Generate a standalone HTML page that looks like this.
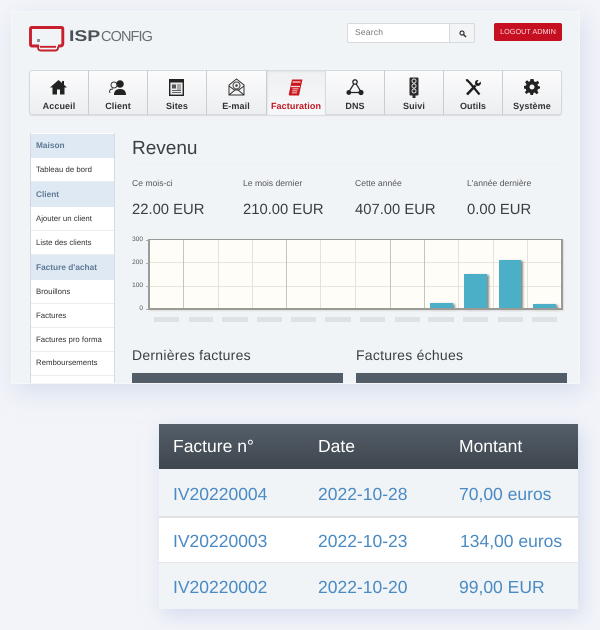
<!DOCTYPE html>
<html><head><meta charset="utf-8"><style>
html,body{margin:0;padding:0}
body{width:600px;height:630px;position:relative;overflow:hidden;background:#f2f4f9;font-family:"Liberation Sans",sans-serif;text-rendering:geometricPrecision}
div,span,svg{position:absolute;box-sizing:border-box}
.t{white-space:nowrap}
.nav{left:29px;top:70px;width:533px;height:45px;border:1px solid #d5d8dc;border-radius:3px;background:linear-gradient(#fbfbfc,#eceef0);box-shadow:0 1px 1px #d8dbe0}
.sep{top:70px;width:1px;height:45px;background:#c9ccd0}
.nl{top:101px;font-size:9px;font-weight:bold;color:#333;width:60px;text-align:center;white-space:nowrap;letter-spacing:.1px}
.si{left:31px;width:83px;background:#fff;border-bottom:1px solid #e9edf2;font-size:7.8px;color:#333;padding-left:5px;white-space:nowrap}
.sh{left:31px;width:83px;background:#dfe9f3;font-size:8.3px;font-weight:bold;color:#5f7a96;padding-left:5px;white-space:nowrap}
.lb{top:178px;font-size:8.6px;color:#555;white-space:nowrap}
.val{top:202px;font-size:14.8px;color:#3a3d40;white-space:nowrap}
.g{left:149px;width:413px;height:1px;background:#e8e6dd}
.v{top:240px;width:1px;height:69px;background:#c6c5bd}
.v.l{background:#e4e2da}
.bar{background:#4bafc7;box-shadow:2px 1px 2px #8a8a84}
.xl{top:317px;height:5px;background:#dfe2e5}
.yl{font-size:6.5px;color:#555;width:20px;text-align:right;left:123px}
.h{top:424px;font-size:17.5px;color:#fff;white-space:nowrap}
.c{font-size:17.5px;color:#4a8ac4;white-space:nowrap}
</style></head><body>
<div style="left:0;top:0;width:600px;height:400px;filter:blur(.3px)">
<div style="left:12px;top:12px;width:567px;height:371px;background:#f1f4f7;box-shadow:0 0 0 1px #f6f7fa,4px 8px 22px rgba(190,203,228,.55)"></div>

<!-- logo -->
<svg style="left:28px;top:25px" width="38" height="28" viewBox="0 0 38 28"><path d="M11 21H4Q2.500 21 2.500 19V4Q2.500 2.500 4 2.500H33Q34.800 2.500 34.800 4V18.500Q34.800 21 32 21H30" fill="none" stroke="#c7202c" stroke-width="2.900"/><path d="M10.500 20Q9 25.500 13 25.500H27Q30.500 25.500 30 21.500M12 21.800H28" fill="none" stroke="#c7202c" stroke-width="1.900"/><rect x="9" y="14" width="3" height="3" fill="#8a8f94"/></svg>
<div class="t" style="left:69px;top:27px;font-size:15.500px;line-height:20px;font-weight:bold;color:#4c5257;transform:scaleX(1.25);transform-origin:left top">ISP</div>
<div class="t" style="left:101px;top:27px;font-size:14.500px;line-height:20px;color:#6a6f74;letter-spacing:-.9px">CONFIG</div>

<!-- search -->
<div style="left:347px;top:23px;width:103px;height:20px;background:#fff;border:1px solid #d6d9dd;border-radius:2px 0 0 2px"></div>
<div class="t" style="left:355px;top:27px;font-size:8.500px;color:#777;letter-spacing:.2px">Search</div>
<div style="left:449px;top:23px;width:26px;height:20px;background:#f3f4f6;border:1px solid #d6d9dd;border-radius:0 2px 2px 0"></div>
<svg style="left:459px;top:30px" width="8" height="8" viewBox="0 0 8 8"><circle cx="3" cy="3" r="2" fill="none" stroke="#333" stroke-width="1.200"/><path d="M4.500 4.500L7 7" stroke="#333" stroke-width="1.500"/></svg>
<div class="t" style="left:494px;top:23px;width:68px;height:18px;background:#c60f21;border-radius:2px;color:#f8d9dc;font-size:7.300px;line-height:17px;text-align:center">LOGOUT ADMIN</div>

<!-- nav -->
<div class="nav"></div>
<div style="left:266px;top:70px;width:59px;height:45px;background:linear-gradient(#eff0f2,#f7f8f9);box-shadow:inset 1px 1px 2px #cfd1d4"></div>
<div class="sep" style="left:88px"></div><div class="sep" style="left:147px"></div><div class="sep" style="left:206px"></div><div class="sep" style="left:266px"></div><div class="sep" style="left:325px;background:#d9dbde"></div><div class="sep" style="left:384px"></div><div class="sep" style="left:443px"></div><div class="sep" style="left:502px"></div>

<svg style="left:49px;top:79px" width="20" height="16" viewBox="0 0 20 16"><path d="M9.500 1L1 8.500H3.500V15.500H8V10.500H11V15.500H15.500V8.500H18L15 5.800V2H13V4Z" fill="#222"/></svg>
<svg style="left:108px;top:79px" width="20" height="17" viewBox="0 0 20 17"><circle cx="12" cy="5" r="3.800" fill="#222"/><path d="M6 16Q6 10 12 10Q18 10 18 16Z" fill="#222"/><circle cx="6" cy="6" r="3" fill="none" stroke="#333" stroke-width="1"/><path d="M2 14Q0.500 10 5 10" fill="none" stroke="#333" stroke-width="1"/></svg>
<svg style="left:169px;top:79px" width="15" height="17" viewBox="0 0 15 17"><rect x=".7" y=".7" width="13.600" height="15.600" fill="#e8e9ea" stroke="#222" stroke-width="1.400"/><rect x="1" y="1" width="13" height="2.500" fill="#222"/><rect x="3" y="5.500" width="4" height="4" fill="#555"/><path d="M8 6H12M8 8H12M8 10H12M3 11.500H12M3 13.500H12" stroke="#666" stroke-width="1"/></svg>
<svg style="left:228px;top:78px" width="17" height="18" viewBox="0 0 17 18"><path d="M1 7L8.500 1L16 7V17H1Z" fill="#f3f3f3" stroke="#333" stroke-width="1"/><circle cx="8.500" cy="7.500" r="3.500" fill="none" stroke="#444" stroke-width="1"/><circle cx="8.500" cy="7.500" r="1.300" fill="#444"/><path d="M1 8L7 12.500M16 8L10 12.500M1 17L7 12H10L16 17" fill="none" stroke="#333" stroke-width="1"/></svg>
<svg style="left:288px;top:79px" width="15" height="17" viewBox="0 0 15 17"><path d="M4 .5Q4.500 .5 14.500 .5L13 7L11 16.500H2Q.5 16.500 .8 15Z" fill="#c9161f"/><path d="M4.500 3H12.500M3 7.500H12" stroke="#f7dede" stroke-width="1.200"/><path d="M4.500 9.800H10.500M4.200 11.800H9.500M3.800 13.800H9" stroke="#fbe4e4" stroke-width=".9"/></svg>
<svg style="left:346px;top:79px" width="18" height="17" viewBox="0 0 18 17"><path d="M9 3L2.500 13.500H15.500Z" fill="none" stroke="#222" stroke-width="1.200"/><circle cx="9" cy="3" r="2.200" fill="#f4f4f4" stroke="#222" stroke-width="1.300"/><circle cx="2.800" cy="13.500" r="2.400" fill="#222"/><circle cx="15" cy="13.500" r="2.600" fill="#222"/></svg>
<svg style="left:409px;top:77px" width="10" height="21" viewBox="0 0 10 21"><rect x=".5" y=".5" width="9" height="18" rx="1" fill="#2a2a2a"/><rect x="3.500" y="18" width="3" height="3" fill="#2a2a2a"/><circle cx="5" cy="4" r="2" fill="none" stroke="#ddd" stroke-width="1"/><circle cx="5" cy="9" r="2" fill="none" stroke="#ddd" stroke-width="1"/><circle cx="5" cy="14" r="2" fill="none" stroke="#ddd" stroke-width="1"/></svg>
<svg style="left:465px;top:79px" width="17" height="17" viewBox="0 0 17 17"><path d="M2 1L5 4L14.500 15.500" stroke="#1e1e1e" stroke-width="2.200" fill="none"/><path d="M1 1.500L3 0.800" stroke="#1e1e1e" stroke-width="2"/><path d="M2 15.500L10.500 6.500" stroke="#1e1e1e" stroke-width="2.600"/><path d="M15.800 2.500L13.500 4.500L12 3.500L13.500 1Q10 .5 10 4Q10 7 13 7Q16.500 6.500 15.800 2.500Z" fill="#1e1e1e"/></svg>
<svg style="left:524px;top:79px" width="16" height="16" viewBox="0 0 16 16"><path d="M6.500 0H9.500L10 2.300L11.800 3L13.800 1.800L15.200 4L13.500 5.500L14 7L16 7.500V9.500L14 10L13.300 11.700L14.500 13.700L12.500 15.200L10.800 13.500L9.500 14L9 16H6.500L6 14L4.500 13.500L2.500 15L.8 13.200L2.300 11.500L1.800 10L0 9.500V7L2 6.500L2.500 5L1 3.200L3 1.200L4.800 2.700L6 2.200Z" fill="#222"/><circle cx="8" cy="8" r="2.500" fill="#f5f5f5"/></svg>

<div class="nl" style="left:29px">Accueil</div>
<div class="nl" style="left:88px">Client</div>
<div class="nl" style="left:147px">Sites</div>
<div class="nl" style="left:206px">E-mail</div>
<div class="nl" style="left:266px;color:#c01722">Facturation</div>
<div class="nl" style="left:325px">DNS</div>
<div class="nl" style="left:384px">Suivi</div>
<div class="nl" style="left:443px">Outils</div>
<div class="nl" style="left:502px">Système</div>

<!-- sidebar -->
<div style="left:30px;top:133px;width:85px;height:250px;background:#fff;border-left:1px solid #cfd8e3;border-right:1px solid #d4dbe4"></div>
<div class="sh" style="top:134px;height:24px;line-height:23px">Maison</div>
<div class="si" style="top:158px;height:24px;line-height:23px">Tableau de bord</div>
<div class="sh" style="top:182px;height:25px;line-height:24px">Client</div>
<div class="si" style="top:207px;height:24px;line-height:23px">Ajouter un client</div>
<div class="si" style="top:231px;height:24px;line-height:23px">Liste des clients</div>
<div class="sh" style="top:255px;height:25px;line-height:24px">Facture d'achat</div>
<div class="si" style="top:280px;height:24px;line-height:23px">Brouillons</div>
<div class="si" style="top:304px;height:24px;line-height:23px">Factures</div>
<div class="si" style="top:328px;height:24px;line-height:23px">Factures pro forma</div>
<div class="si" style="top:352px;height:24px;line-height:22px">Remboursements</div>

<!-- main -->
<div class="t" style="left:132px;top:138px;font-size:19px;line-height:22px;color:#3c3f42">Revenu</div>
<div style="left:132px;top:163px;width:430px;height:1px;background:#eceff3"></div>
<div class="lb" style="left:132px">Ce mois-ci</div><div class="lb" style="left:243px">Le mois dernier</div><div class="lb" style="left:355px">Cette année</div><div class="lb" style="left:467px">L'année dernière</div>
<div class="val" style="left:132px">22.00 EUR</div><div class="val" style="left:243px">210.00 EUR</div><div class="val" style="left:355px">407.00 EUR</div><div class="val" style="left:467px">0.00 EUR</div>

<!-- chart -->
<div style="left:149px;top:240px;width:413px;height:70px;background:#fffdf8"></div>
<div class="g" style="top:262px"></div><div class="g" style="top:286px"></div>
<div class="v" style="left:183px"></div><div class="v l" style="left:218px"></div><div class="v l" style="left:252px"></div><div class="v" style="left:286px"></div><div class="v l" style="left:320px"></div><div class="v l" style="left:355px"></div><div class="v" style="left:390px"></div><div class="v" style="left:424px"></div><div class="v l" style="left:458px"></div><div class="v l" style="left:493px"></div><div class="v l" style="left:527px"></div>
<div class="bar" style="left:430px;top:303px;width:23px;height:6px"></div>
<div class="bar" style="left:464px;top:274px;width:23px;height:35px"></div>
<div class="bar" style="left:499px;top:260px;width:22px;height:49px"></div>
<div class="bar" style="left:533px;top:304px;width:23px;height:5px"></div>
<div style="left:148px;top:239px;width:415px;height:71px;border:1px solid #9a9a96;border-left-width:2px;border-right-width:2px;border-bottom-width:2px;box-shadow:1px 1px 1px #ddd"></div>
<div class="yl" style="top:236px">300</div><div class="yl" style="top:259px">200</div><div class="yl" style="top:282px">100</div><div class="yl" style="top:305px">0</div>
<div style="left:146px;top:240px;width:3px;height:1px;background:#aaa"></div><div style="left:146px;top:263px;width:3px;height:1px;background:#aaa"></div><div style="left:146px;top:286px;width:3px;height:1px;background:#aaa"></div><div style="left:146px;top:309px;width:3px;height:1px;background:#aaa"></div>
<div class="xl" style="left:154px;width:25px"></div><div class="xl" style="left:189px;width:24px"></div><div class="xl" style="left:222px;width:26px"></div><div class="xl" style="left:257px;width:25px"></div><div class="xl" style="left:291px;width:25px"></div><div class="xl" style="left:325px;width:26px"></div><div class="xl" style="left:360px;width:25px"></div><div class="xl" style="left:395px;width:25px"></div><div class="xl" style="left:428px;width:26px"></div><div class="xl" style="left:463px;width:25px"></div><div class="xl" style="left:498px;width:25px"></div><div class="xl" style="left:532px;width:25px"></div>

<div class="t" style="left:132px;top:347px;font-size:14px;line-height:16px;color:#3c3f42;letter-spacing:.25px">Dernières factures</div>
<div class="t" style="left:356px;top:347px;font-size:14px;line-height:16px;color:#3c3f42;letter-spacing:.25px">Factures échues</div>
<div style="left:132px;top:373px;width:211px;height:10px;background:#525d68"></div>
<div style="left:356px;top:373px;width:211px;height:10px;background:#525d68"></div>
</div>

<!-- table -->
<div style="left:159px;top:424px;width:419px;height:185px;background:#f1f4f7;box-shadow:4px 6px 18px rgba(190,203,228,.6)"></div>
<div style="left:159px;top:424px;width:419px;height:45px;background:linear-gradient(#555f6a,#3e464e)"></div>
<div class="h" style="left:173px;line-height:45px">Facture n°</div><div class="h" style="left:318px;line-height:45px">Date</div><div class="h" style="left:459px;line-height:45px">Montant</div>
<div style="left:159px;top:516px;width:419px;height:47px;background:#fff;border-top:2px solid #dfe1e3;border-bottom:1px solid #e3e6ea"></div>
<div class="c" style="left:173px;top:484px">IV20220004</div><div class="c" style="left:318px;top:484px">2022-10-28</div><div class="c" style="left:459px;top:484px">70,00 euros</div>
<div class="c" style="left:173px;top:531px">IV20220003</div><div class="c" style="left:318px;top:531px">2022-10-23</div><div class="c" style="left:460px;top:531px">134,00 euros</div>
<div class="c" style="left:173px;top:577px">IV20220002</div><div class="c" style="left:318px;top:577px">2022-10-20</div><div class="c" style="left:459px;top:577px">99,00 EUR</div>
</body></html>
